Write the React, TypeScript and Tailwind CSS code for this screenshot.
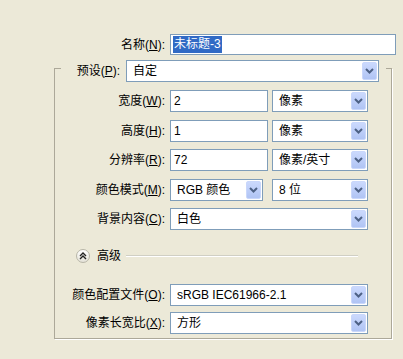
const Chevron = () => (
  <svg width="9" height="6" viewBox="0 0 9 6">
    <path d="M1 1 L4.5 4.5 L8 1" fill="none" stroke="#4d6185" strokeWidth="2" />
  </svg>
);

const Dropdown = ({ w, value }: { w: string; value: string }) => (
  <div className={`flex h-[22px] items-center border border-[#7f9db9] bg-white ${w}`}>
    <span className="flex-1 truncate pl-[6px]">{value}</span>
    <span className="mr-[1px] flex h-[18px] w-[15px] items-center justify-center rounded-[2px] border border-[#c9d7fb] bg-gradient-to-b from-[#cbd9fd] to-[#b0c4f4]">
      <Chevron />
    </span>
  </div>
);

const TextBox = ({ w, value }: { w: string; value: string }) => (
  <div className={`flex h-[22px] items-center border border-[#7f9db9] bg-white pl-[3px] ${w}`}>
    {value}
  </div>
);

const Label = ({ text, k, after }: { text: string; k: string; after?: string }) => (
  <span className="w-[110px] whitespace-nowrap text-right">
    {text}(<span className="underline">{k}</span>){after ?? ":"}
  </span>
);

const App = () => {
  return (
    <div
      className="h-[359px] w-[403px] overflow-hidden bg-[#ece9d8] pt-[34px] text-[12px] leading-[14px] text-black"
      style={{ fontFamily: '"Liberation Sans", "Noto Sans CJK SC", sans-serif' }}
    >
      {/* 名称 */}
      <div className="flex items-center">
        <span className="w-[165px] text-right">
          名称(<span className="underline">N</span>):
        </span>
        <div className="ml-[5px] flex h-[21px] w-[226px] items-center border border-[#7f9db9] bg-white pl-[2px]">
          <span className="bg-[#316ac5] px-[1px] leading-[17px] text-white">未标题-3</span>
        </div>
      </div>

      {/* 分组框 */}
      <fieldset className="ml-[54px] w-[338px] border border-[#aca899] pb-[4px] shadow-[1px_1px_0_#fff]">
        <legend className="ml-[6px] pl-[11px] pr-[7px] pt-[5px]">
          <div className="flex items-center">
            <span className="w-[48px] text-right">
              预设(<span className="underline">P</span>):
            </span>
            <Dropdown w="ml-[6px] w-[253px]" value="自定" />
          </div>
        </legend>

        <div className="mt-[8px] flex items-center">
          <Label text="宽度" k="W" />
          <TextBox w="ml-[5px] w-[98px]" value="2" />
          <Dropdown w="ml-[4px] w-[96px]" value="像素" />
        </div>

        <div className="mt-[8px] flex items-center">
          <Label text="高度" k="H" />
          <TextBox w="ml-[5px] w-[98px]" value="1" />
          <Dropdown w="ml-[4px] w-[96px]" value="像素" />
        </div>

        <div className="mt-[7px] flex items-center">
          <Label text="分辨率" k="R" />
          <TextBox w="ml-[5px] w-[98px]" value="72" />
          <Dropdown w="ml-[4px] w-[96px]" value="像素/英寸" />
        </div>

        <div className="mt-[8px] flex items-center">
          <Label text="颜色模式" k="M" />
          <Dropdown w="ml-[5px] w-[93px]" value="RGB 颜色" />
          <Dropdown w="ml-[9px] w-[96px]" value="8 位" />
        </div>

        <div className="mt-[7px] flex items-center">
          <Label text="背景内容" k="C" />
          <Dropdown w="ml-[5px] w-[198px]" value="白色" />
        </div>

        {/* 高级 */}
        <div className="mr-[33px] mt-[19px] flex h-[14px] items-center">
          <span className="ml-[21px] flex h-[14px] w-[14px] items-center justify-center rounded-full border border-[#b8b6a8] bg-gradient-to-b from-white to-[#e4e2d8]">
            <svg width="8" height="8" viewBox="0 0 8 8">
              <path d="M1 4 L4 1 L7 4 M1 7 L4 4 L7 7" fill="none" stroke="#222" strokeWidth="1.4" />
            </svg>
          </span>
          <span className="ml-[7px]">高级</span>
          <div className="ml-[5px] h-0 flex-1 border-t border-b border-t-[#d0cfc4] border-b-white" />
        </div>

        <div className="mt-[21px] flex items-center">
          <Label text="颜色配置文件" k="O" />
          <Dropdown w="ml-[5px] w-[198px]" value="sRGB IEC61966-2.1" />
        </div>

        <div className="mt-[6px] flex items-center">
          <Label text="像素长宽比" k="X" />
          <Dropdown w="ml-[5px] w-[198px]" value="方形" />
        </div>
      </fieldset>
    </div>
  );
};

export default App;
